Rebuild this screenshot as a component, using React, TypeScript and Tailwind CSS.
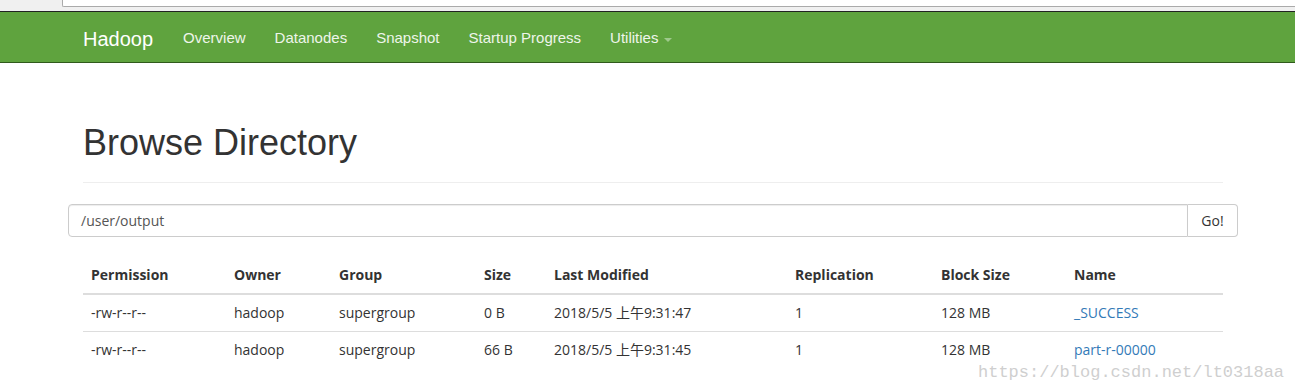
const navLinks = ["Overview", "Datanodes", "Snapshot", "Startup Progress"];

const columns = [
  { label: "Permission", w: "w-[143px]" },
  { label: "Owner", w: "w-[105px]" },
  { label: "Group", w: "w-[145px]" },
  { label: "Size", w: "w-[70px]" },
  { label: "Last Modified", w: "w-[241px]" },
  { label: "Replication", w: "w-[146px]" },
  { label: "Block Size", w: "w-[133px]" },
  { label: "Name", w: "" },
];

const files = [
  ["-rw-r--r--", "hadoop", "supergroup", "0 B", "2018/5/5 上午9:31:47", "1", "128 MB", "_SUCCESS"],
  ["-rw-r--r--", "hadoop", "supergroup", "66 B", "2018/5/5 上午9:31:45", "1", "128 MB", "part-r-00000"],
];

export default function App() {
  return (
    <div className="relative w-[1295px] h-[390px] overflow-hidden bg-white font-['Liberation_Sans','Noto_Sans_CJK_SC',sans-serif] text-[#333]">
      {/* browser chrome sliver */}
      <div className="h-[12px] bg-[#f0f0f0] border-b border-[#222] pl-[62px]">
        <div className="h-[7px] bg-white border-l border-b border-[#aaa] rounded-bl-[2px]" />
      </div>

      {/* navbar */}
      <nav className="h-[51px] bg-[#5fa33e] border-b border-[#2f5a1c] flex items-center pl-[83px] pt-[3px]">
        <span className="text-white text-[20px] mr-[30px]">Hadoop</span>
        <div className="flex items-center gap-[29px] text-[15px] text-[#eef5ea]">
          {navLinks.map((l) => (
            <span key={l}>{l}</span>
          ))}
          <span className="flex items-center">
            Utilities
            <span className="ml-[6px] mt-[2px] w-0 h-0 border-l-[4px] border-r-[4px] border-t-[4px] border-l-transparent border-r-transparent border-t-[#9fc98c]" />
          </span>
        </div>
      </nav>

      {/* content */}
      <div className="ml-[68px] w-[1170px]">
        <div className="mx-[15px] pt-[60px] pb-[19px] border-b border-[#eee]">
          <h1 className="text-[36px] leading-[40px] text-[#333]">Browse Directory</h1>
        </div>

        <div className="mt-[21px] flex h-[33px] text-[14px] font-['Open_Sans','Noto_Sans_CJK_SC',sans-serif]">
          <div className="flex-1 border border-[#ccc] rounded-l-[4px] flex items-center px-[12px] text-[#555] shadow-[inset_0_1px_1px_rgba(0,0,0,0.075)]">
            /user/output
          </div>
          <div className="w-[50px] border border-l-0 border-[#ccc] rounded-r-[4px] flex items-center justify-center text-[#333]">
            Go!
          </div>
        </div>

        <table className="mx-[15px] mt-[19px] w-[1140px] text-[14px] border-collapse table-fixed font-['Open_Sans','Noto_Sans_CJK_SC',sans-serif]">
          <thead>
            <tr className="border-b-2 border-[#ddd]">
              {columns.map((c) => (
                <th key={c.label} className={`${c.w} text-left font-bold px-[8px] h-[38px] align-middle`}>
                  {c.label}
                </th>
              ))}
            </tr>
          </thead>
          <tbody>
            {files.map((row) => (
              <tr key={row[7]} className="border-t border-[#ddd] first:border-t-0">
                {row.map((cell, i) => (
                  <td key={i} className="px-[8px] h-[37px] align-middle">
                    {i === 7 ? <span className="text-[#337ab7]">{cell}</span> : cell}
                  </td>
                ))}
              </tr>
            ))}
          </tbody>
        </table>
      </div>

      {/* watermark */}
      <div className="absolute left-[978px] top-[360px] font-['Liberation_Mono',monospace] text-[17px] text-[#cfcfcf]">
        https://blog.csdn.net/lt0318aa
      </div>
    </div>
  );
}
